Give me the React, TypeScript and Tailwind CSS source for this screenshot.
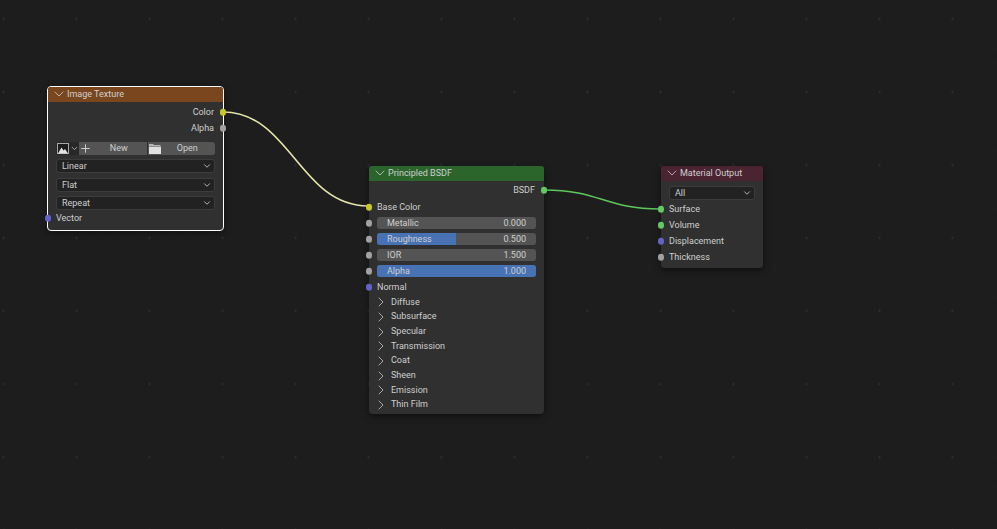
import React from "react"
import { ChevronDown, ChevronRight, Plus } from "lucide-react"

const labelCls = "text-[9px] leading-none text-[#cfcfcf] whitespace-nowrap"

const Socket = ({ color, side }: { color: string; side: "left" | "right" }) => (
  <span
    className={`absolute top-1/2 -translate-y-1/2 w-[6.5px] h-[6.5px] rounded-full ${color} ${
      side === "left" ? "-left-[3.25px]" : "-right-[3.25px]"
    }`}
  />
)

const SocketRow = ({
  label,
  color,
  side,
  height = "h-4",
}: {
  label: string
  color: string
  side: "left" | "right"
  height?: string
}) => (
  <div className={`relative flex items-center ${height} ${side === "left" ? "pl-2 justify-start" : "pr-[9px] justify-end"}`}>
    <Socket color={color} side={side} />
    <span className={labelCls}>{label}</span>
  </div>
)

const Dropdown = ({ label }: { label: string }) => (
  <div className="flex items-center justify-between w-full h-[14px] rounded-[3px] bg-[#222222] border border-[#3c3c3c] pl-[5px] pr-[2px]">
    <span className={labelCls}>{label}</span>
    <ChevronDown size={10} strokeWidth={2} className="text-[#cfcfcf]" />
  </div>
)

const Slider = ({ label, value, fill }: { label: string; value: string; fill: number }) => (
  <div className="relative flex items-center h-4 pl-2 pr-2">
    <Socket color="bg-[#a1a1a1]" side="left" />
    <div className="relative flex items-center justify-between w-full h-3 rounded-[3px] bg-[#545454] overflow-hidden px-[10px]">
      <div className="absolute left-0 top-0 bottom-0 bg-[#4772b3]" style={{ width: `${fill * 100}%` }} />
      <span className={`relative ${labelCls}`}>{label}</span>
      <span className={`relative ${labelCls}`}>{value}</span>
    </div>
  </div>
)

const Panel = ({ label }: { label: string }) => (
  <div className="flex items-center h-[14.7px] pl-[4px] gap-[2px]">
    <ChevronRight size={16} strokeWidth={1.1} className="text-[#d4d4d4]" />
    <span className={labelCls}>{label}</span>
  </div>
)

const NodeHeader = ({ title, color }: { title: string; color: string }) => (
  <div className={`flex items-center h-[15px] pb-[1px] pl-[3px] rounded-t-[3px] ${color}`}>
    <ChevronDown size={16} strokeWidth={1.1} className="text-[#d4d4d4]" />
    <span className={labelCls}>{title}</span>
  </div>
)

const ImageIcon = () => (
  <svg width="12" height="11" viewBox="0 0 12 11">
    <rect x="0.5" y="0.5" width="11" height="10" fill="#1c1c1c" stroke="#a8a8a8" />
    <path d="M1 10.5 L4.5 4.5 L6.5 7.5 L8 6 L11 10.5 Z" fill="#e4e4e4" />
  </svg>
)

const FolderIcon = () => (
  <svg width="12" height="11" viewBox="0 0 12 11">
    <path d="M0 1 H4 L5 2 H11.5 V3 H0 Z" fill="#b8b8b8" />
    <rect x="0" y="3.6" width="12" height="7.4" fill="#e0e0e0" />
  </svg>
)

const ImageButtons = () => (
  <div className="flex items-center h-[13px] mx-2 rounded-[3px] overflow-hidden">
    <div className="flex items-center justify-center gap-[1px] w-[23px] h-full bg-[#282828]">
      <ImageIcon />
      <ChevronDown size={9} strokeWidth={2} className="text-[#cfcfcf]" />
    </div>
    <div className="relative flex items-center justify-center flex-1 h-full bg-[#545454] pl-3">
      <Plus size={13} strokeWidth={1.6} className="absolute left-0 text-[#e0e0e0]" />
      <span className={labelCls}>New</span>
    </div>
    <div className="w-px h-full bg-[#2e2e2e]" />
    <div className="relative flex items-center justify-center flex-1 h-full bg-[#545454] pl-3">
      <span className="absolute left-[1px]">
        <FolderIcon />
      </span>
      <span className={labelCls}>Open</span>
    </div>
  </div>
)

const App = () => {
  return (
    <div className="relative w-[997px] h-[529px] overflow-hidden bg-[#1d1d1d] bg-[radial-gradient(circle,#2b2b2b_1px,transparent_1.2px),radial-gradient(circle,#222222_0.8px,transparent_1px)] bg-[size:73px_73px,14.6px_14.6px] bg-[position:-33px_-17.5px,-3.8px_-2.3px] [font-family:Roboto,'Liberation_Sans',sans-serif]">
      <svg className="absolute inset-0" width="997" height="529" fill="none">
        <path d="M223 112 C 290 112, 300 206, 368 206" stroke="#e6e6ab" strokeWidth="1.6" />
        <path d="M544 190 C 600 190, 605 209, 660 209" stroke="#5cc85c" strokeWidth="1.6" />
      </svg>

      <div className="absolute left-[47px] top-[86px] w-[177px] h-[145px] rounded-[4px] bg-[#303030] border border-white shadow-[0_2px_6px_rgba(0,0,0,0.4)]">
        <NodeHeader title="Image Texture" color="bg-[#79461d]" />
        <div className="pt-[2px]">
          <SocketRow label="Color" color="bg-[#c7c729]" side="right" />
          <SocketRow label="Alpha" color="bg-[#a1a1a1]" side="right" />
        </div>
        <div className="pt-[6px] flex flex-col gap-[5px]">
          <div className="mb-[-1px]">
            <ImageButtons />
          </div>
          <div className="px-2">
            <Dropdown label="Linear" />
          </div>
          <div className="px-2">
            <Dropdown label="Flat" />
          </div>
          <div className="px-2 mt-[-1px]">
            <Dropdown label="Repeat" />
          </div>
        </div>
        <SocketRow label="Vector" color="bg-[#6363c7]" side="left" />
      </div>

      <div className="absolute left-[369px] top-[166px] w-[175px] h-[248px] rounded-[4px] bg-[#303030] shadow-[0_2px_6px_rgba(0,0,0,0.5)]">
        <NodeHeader title="Principled BSDF" color="bg-[#2b652b]" />
        <div className="pt-[1px] pb-[1px]">
          <SocketRow label="BSDF" color="bg-[#63c763]" side="right" />
        </div>
        <SocketRow label="Base Color" color="bg-[#c7c729]" side="left" />
        <Slider label="Metallic" value="0.000" fill={0} />
        <Slider label="Roughness" value="0.500" fill={0.494} />
        <Slider label="IOR" value="1.500" fill={0} />
        <Slider label="Alpha" value="1.000" fill={1} />
        <SocketRow label="Normal" color="bg-[#6363c7]" side="left" />
        <div className="mt-[-0.2px]">
          {["Diffuse", "Subsurface", "Specular", "Transmission", "Coat", "Sheen", "Emission", "Thin Film"].map(p => (
            <Panel key={p} label={p} />
          ))}
        </div>
      </div>

      <div className="absolute left-[661px] top-[166px] w-[102px] h-[102px] rounded-[4px] bg-[#303030] shadow-[0_2px_6px_rgba(0,0,0,0.5)]">
        <NodeHeader title="Material Output" color="bg-[#4a2431]" />
        <div className="px-2 pt-[5px] pb-[1px]">
          <Dropdown label="All" />
        </div>
        <SocketRow label="Surface" color="bg-[#63c763]" side="left" />
        <SocketRow label="Volume" color="bg-[#63c763]" side="left" />
        <SocketRow label="Displacement" color="bg-[#6363c7]" side="left" />
        <SocketRow label="Thickness" color="bg-[#a1a1a1]" side="left" />
      </div>
    </div>
  )
}

export default App
